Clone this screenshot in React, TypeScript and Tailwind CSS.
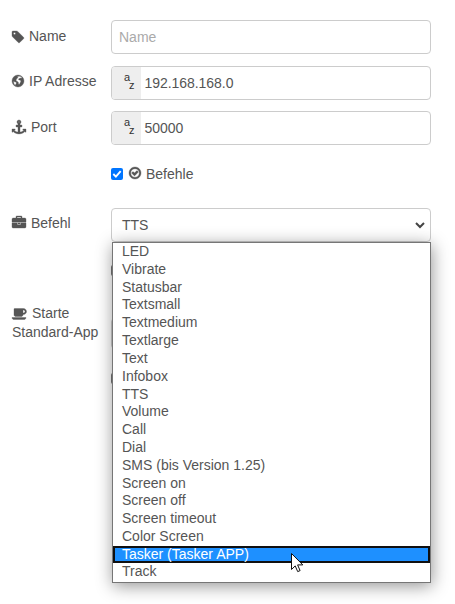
import React from "react";

const TAG =
  "M576 448q0-53-37.5-90.5t-90.5-37.5-90.5 37.5-37.5 90.5 37.5 90.5 90.5 37.5 90.5-37.5 37.5-90.5zm1067 576q0 53-37 90l-491 492q-39 37-91 37-53 0-90-37l-715-716q-38-37-64.5-101t-26.5-117v-416q0-52 38-90t90-38h416q53 0 117 26.5t102 64.5l715 714q37 39 37 91z";
const GLOBE =
  "M896 128a768 768 0 1 0 0 1536a768 768 0 1 0 0-1536zM1010 290l150 0q160 60 240 190l-80 60-120-30-70 60-110 10-60 90 60 90 150 20 90 100-20 150-80 120-40 130-110 60-60-130-20-170-110-80-110-20-60-140 40-160 130-110 60-120-80-90zM330 930l130 60 130 30 110 110-40 130-90 110 10 90q-130-70-190-190-60-130-60-340z";
const ANCHOR =
  "M960 256q0-26-19-45t-45-19-45 19-19 45 19 45 45 19 45-19 19-45zm832 928v352q0 22-20 30-8 2-12 2-12 0-23-9l-93-93q-119 143-318.5 226.5t-429.5 83.5-429.5-83.5-318.5-226.5l-93 93q-9 9-23 9-4 0-12-2-20-8-20-30v-352q0-14 9-23t23-9h352q22 0 30 20 8 19-7 35l-100 100q67 91 189.5 153.5t271.5 82.5v-647h-192q-26 0-45-19t-19-45v-128q0-26 19-45t45-19h192v-163q-58-34-93-92.5t-35-128.5q0-106 75-181t181-75 181 75 75 181q0 70-35 128.5t-93 92.5v163h192q26 0 45 19t19 45v128q0 26-19 45t-45 19h-192v647q149-20 271.5-82.5t189.5-153.5l-100-100q-15-16-7-35 8-20 30-20h352q14 0 23 9t9 23z";
const CHECK =
  "M1299 813l-422 422q-19 19-45 19t-45-19l-294-294q-19-19-19-45t19-45l102-102q19-19 45-19t45 19l147 147 275-275q19-19 45-19t45 19l102 102q19 19 19 45t-19 45zm141 83q0-148-73-273t-198-198-273-73-273 73-198 198-73 273 73 273 198 198 273 73 273-73 198-198 73-273zm224 0q0 209-103 385.5t-279.5 279.5-385.5 103-385.5-103-279.5-279.5-103-385.5 103-385.5 279.5-279.5 385.5-103 385.5 103 279.5 279.5 103 385.5z";
const BRIEFCASE =
  "M640 256h512v-128h-512v128zm1152 640v480q0 66-47 113t-113 47h-1472q-66 0-113-47t-47-113v-480h672v160q0 26 19 45t45 19h320q26 0 45-19t19-45v-160h672zm-768 0v128h-256v-128h256zm768-480v384h-1792v-384q0-66 47-113t113-47h352v-160q0-40 28-68t68-28h576q40 0 68 28t28 68v160h352q66 0 113 47t47 113z";
const COFFEE =
  "M1664 576q0-80-56-136t-136-56h-64v384h64q80 0 136-56t56-136zm-1664 768h1792q0 106-75 181t-181 75h-1280q-106 0-181-75t-75-181zm1856-768q0 159-112.5 271.5t-271.5 112.5h-64v32q0 92-66 158t-158 66h-704q-92 0-158-66t-66-158v-736q0-26 19-45t45-19h1152q159 0 271.5 112.5t112.5 271.5z";

function Icon({ d, box, className }: { d: string; box: string; className: string }) {
  return (
    <svg
      viewBox={box}
      className={`inline-block shrink-0 overflow-visible fill-current stroke-current ${className}`}
      strokeWidth="45"
      fillRule="evenodd"
      aria-hidden="true"
    >
      <path d={d} />
    </svg>
  );
}

function TypedInput({ value }: { value: string }) {
  return (
    <div className="flex h-[34px] w-80 overflow-hidden rounded-[4px] border border-[#ccc] bg-white">
      <div className="relative w-[29px] bg-[#eee] text-[11px] leading-none text-[#333]">
        <span className="absolute left-3 top-[5px]">a</span>
        <span className="absolute left-[17px] top-[13px]">z</span>
      </div>
      <span className="pl-[3.5px] leading-[33px] tracking-[-0.05px]">{value}</span>
    </div>
  );
}

const OPTIONS = [
  "LED", "Vibrate", "Statusbar", "Textsmall", "Textmedium", "Textlarge", "Text", "Infobox", "TTS", "Volume",
  "Call", "Dial", "SMS (bis Version 1.25)", "Screen on", "Screen off", "Screen timeout", "Color Screen",
  "Tasker (Tasker APP)", "Track",
];

export default function App() {
  return (
    <div className="relative h-[604px] w-[455px] overflow-hidden bg-white pl-3 pt-5 font-['Liberation_Sans',Arial,sans-serif] text-[14px] text-[#555]">
      <div className="flex h-[46px]">
        <div className="flex h-[33px] w-[99px] items-center">
          <Icon d={TAG} box="128 128 1536 1536" className="mr-[5px] size-[12px]" />Name
        </div>
        <div className="h-[34px] w-80 rounded-[4px] border border-[#ccc] pl-[7px] leading-8 text-[#aaa]">Name</div>
      </div>
      <div className="flex h-[45px]">
        <div className="flex h-[30px] w-[99px] items-center whitespace-nowrap">
          <Icon d={GLOBE} box="128 128 1536 1536" className="mr-[5px] size-[12px]" />IP Adresse
        </div>
        <TypedInput value="192.168.168.0" />
      </div>
      <div className="flex h-[55px]">
        <div className="flex h-8 w-[99px] items-center">
          <Icon d={ANCHOR} box="0 0 1792 1792" className="mr-[5px] size-[14px]" />Port
        </div>
        <TypedInput value="50000" />
      </div>
      <div className="ml-[99px] flex h-[42px] items-start">
        <div className="mt-[2px] flex size-[12px] items-center justify-center rounded-[2px] bg-[#0075ff]">
          <svg viewBox="0 0 13 13" className="size-[12px]" fill="none" stroke="white" strokeWidth="2"><path d="M2.5 6.5 5.3 9.3 10.5 3.4" /></svg>
        </div>
        <Icon d={CHECK} box="128 128 1536 1536" className="ml-[6px] mr-[5px] mt-[1px] size-[12px]" />
        <span className="leading-4">Befehle</span>
      </div>
      <div className="flex h-[96px]">
        <div className="flex h-[30px] w-[99px] items-center">
          <Icon d={BRIEFCASE} box="0 0 1792 1792" className="mr-[5px] size-[14px]" />Befehl
        </div>
        <div className="flex h-[34px] w-80 justify-between rounded-[4px] border border-[#ccc] pl-[10px] leading-[33px]">
          TTS
          <svg viewBox="0 0 10 7" className="mr-[5px] mt-[13px] h-[7px] w-[10px]" fill="none" stroke="#444" strokeWidth="2"><path d="m1 1 4 4 4-4" /></svg>
        </div>
      </div>
      <div className="w-[99px] leading-[19px]">
        <Icon d={COFFEE} box="0 0 1920 1792" className="mr-[5px] h-[14px] w-[15px] align-[-3px]" />Starte
        <br />Standard-App
      </div>

      {/* Edges of the fields underneath the open list */}
      <div className="absolute left-[111px] top-[265px] h-[11px] w-2 rounded-[2px] bg-[#767676]" />
      <div className="absolute left-[111px] top-[318px] h-[31px] w-2 rounded-[4px] border border-[#ccc] bg-[#ddd]" />
      <div className="absolute left-[111px] top-[373px] h-[11px] w-2 rounded-[2px] bg-[#767676]" />

      <div className="absolute left-[112px] top-[242px] h-[341px] w-[319px] border border-[#767676] bg-white shadow-[1px_3px_16px_rgba(0,0,0,0.42)]">
        {OPTIONS.map((o) =>
          o.startsWith("Tasker") ? (
            <div key={o} className="h-[17px] border-2 border-[#101010] bg-[#1e90ff] pl-[7px] leading-[12px] text-white">{o}</div>
          ) : (
            <div key={o} className="h-[17.82px] pl-[9px] leading-[17px]">{o}</div>
          )
        )}
      </div>
      <svg viewBox="0 0 13 20" className="absolute left-[291px] top-[553px] h-[20px] w-[13px]" fill="white" stroke="#111" strokeWidth="1">
        <path d="M.5.5v16l3.7-3.6 2.5 5.7 2.4-1-2.5-5.7h5.2z" />
      </svg>
    </div>
  );
}
